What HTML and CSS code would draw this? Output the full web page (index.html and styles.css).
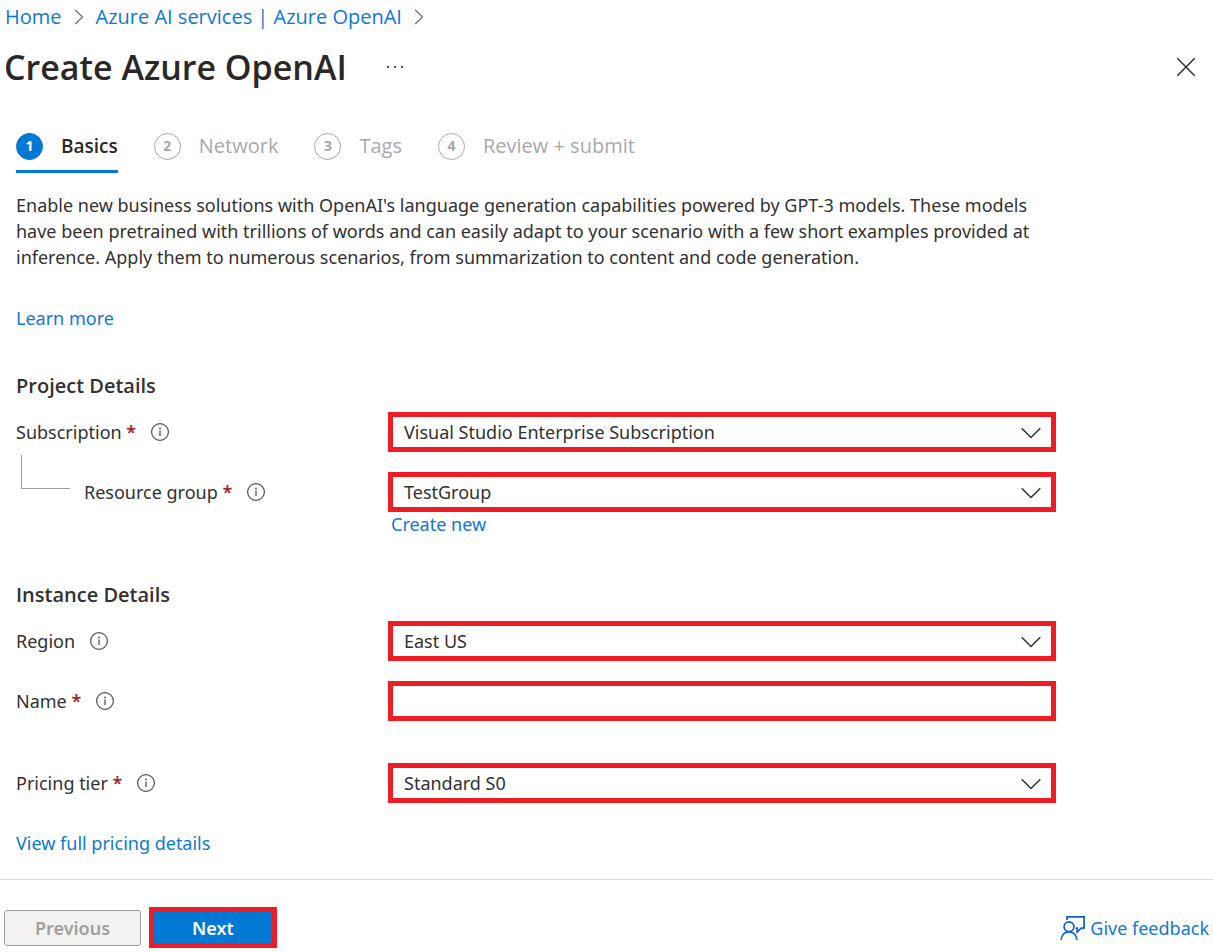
FILE: index.html
```html
<!DOCTYPE html>
<html lang="en">
<head>
<meta charset="utf-8">
<title>Create Azure OpenAI</title>
<meta name="viewport" content="width=device-width, initial-scale=1">
<link rel="stylesheet" href="styles.css">
</head>
<body>
<svg class="symbols" aria-hidden="true">
  <symbol id="info" viewBox="0 0 20 20"><circle cx="10" cy="10" r="8.4" fill="none" stroke="#505050" stroke-width="1.2"/><path d="M10 8.6V14" stroke="#505050" stroke-width="1.3"/><circle cx="10" cy="6.4" r=".9" fill="#505050"/></symbol>
  <symbol id="down" viewBox="0 0 20 12"><path d="M.7 1.2 10 10.5 19.3 1.2" fill="none" stroke="#323130" stroke-width="1.5"/></symbol>
  <symbol id="right" viewBox="0 0 10 16"><path d="M1.2 1 8.5 8 1.2 15" fill="none" stroke="#6e6e6e" stroke-width="1.2"/></symbol>
</svg>
<nav class="breadcrumb" aria-label="Breadcrumb">
  <a href="#">Home</a>
  <svg class="crumb-arrow"><use href="#right"/></svg>
  <a href="#">Azure AI services | Azure OpenAI</a>
  <svg class="crumb-arrow"><use href="#right"/></svg>
</nav>
<header class="title-row">
  <h1>Create Azure OpenAI</h1>
  <button class="icon-button" type="button" aria-label="More actions"><svg width="20" height="4" viewBox="0 0 20 4" fill="#323130"><circle cx="3" cy="2" r="1.1"/><circle cx="10" cy="2" r="1.1"/><circle cx="17" cy="2" r="1.1"/></svg></button>
  <button class="icon-button close" type="button" aria-label="Close"><svg width="20" height="20" viewBox="0 0 20 20"><path d="M1.3 1.3 18.7 18.7M18.7 1.3 1.3 18.7" stroke="#323130" stroke-width="1.5"/></svg></button>
</header>
<main class="content">
  <nav class="steps" aria-label="Steps">
    <button class="step active" type="button"><span class="badge">1</span>Basics</button>
    <button class="step" type="button"><span class="badge">2</span>Network</button>
    <button class="step" type="button"><span class="badge">3</span>Tags</button>
    <button class="step" type="button"><span class="badge">4</span>Review + submit</button>
  </nav>
  <p class="intro">Enable new business solutions with OpenAI's language generation capabilities powered by GPT-3 models. These models have been pretrained with trillions of words and can easily adapt to your scenario with a few short examples provided at inference. Apply them to numerous scenarios, from summarization to content and code generation.</p>
  <p class="learn"><a href="#">Learn more</a></p>

  <h2>Project Details</h2>
  <div class="field">
    <div class="label"><label for="subscription">Subscription <span class="required">*</span></label><svg class="info"><use href="#info"/></svg></div>
    <div class="select"><select id="subscription"><option>Visual Studio Enterprise Subscription</option></select><svg class="chevron"><use href="#down"/></svg></div>
  </div>
  <div class="field">
    <div class="label nested"><span class="branch"></span><label for="group">Resource group <span class="required">*</span></label><svg class="info"><use href="#info"/></svg></div>
    <div class="select"><select id="group"><option>TestGroup</option></select><svg class="chevron"><use href="#down"/></svg></div>
    <a class="create" href="#">Create new</a>
  </div>

  <h2 class="instance">Instance Details</h2>
  <div class="field">
    <div class="label"><label for="region">Region</label><svg class="info"><use href="#info"/></svg></div>
    <div class="select"><select id="region"><option>East US</option></select><svg class="chevron"><use href="#down"/></svg></div>
  </div>
  <div class="field">
    <div class="label"><label for="name">Name <span class="required">*</span></label><svg class="info"><use href="#info"/></svg></div>
    <input id="name" type="text">
  </div>
  <div class="field tier">
    <div class="label"><label for="tier">Pricing tier <span class="required">*</span></label><svg class="info"><use href="#info"/></svg></div>
    <div class="select"><select id="tier"><option>Standard S0</option></select><svg class="chevron"><use href="#down"/></svg></div>
  </div>
  <p class="pricing"><a href="#">View full pricing details</a></p>
</main>
<footer class="footer">
  <button class="previous" type="button" disabled>Previous</button>
  <button class="next" type="button">Next</button>
  <a class="feedback" href="#"><svg width="26" height="26" viewBox="0 0 26 26" fill="none" stroke="#0f5fd0" stroke-width="1.7"><path d="M7 5V1.9H24.1V13.1H21.3L17.2 17V13.1H15.6"/><circle cx="9" cy="11.8" r="4.9"/><path d="M1.2 25C1.2 20 4.7 16.8 9 16.8S16.8 20 16.8 25"/></svg>Give feedback</a>
</footer>
</body>
</html>
```
FILE: styles.css
```css
* { box-sizing: border-box; }

body {
  margin: 0;
  background: #fff;
  color: #323130;
  font: 18px/26px "Noto Sans", "Open Sans", sans-serif;
}

a { color: #0f78d4; text-decoration: none; }
p, h1, h2 { margin: 0; }
button, input, select { font: inherit; color: inherit; }
.symbols { display: none; }

.breadcrumb {
  display: flex;
  align-items: center;
  gap: 12px;
  height: 34px;
  padding-left: 5px;
  font-family: "Open Sans", sans-serif;
  font-size: 20px;
}
.crumb-arrow { width: 10px; height: 16px; }

.title-row {
  display: flex;
  align-items: center;
  height: 66px;
  padding: 0 17px 0 4px;
}
h1 {
  font-family: "Open Sans", sans-serif;
  font-size: 34px;
  line-height: 48px;
  font-weight: 600;
  color: #292827;
}
.icon-button {
  display: flex;
  margin-left: 38px;
  padding: 0;
  border: 0;
  background: none;
}
.close { margin-left: auto; }

.content { max-width: 1072px; padding: 0 16px; }

.steps { display: flex; gap: 36px; margin-top: 22px; }
.step {
  display: flex;
  align-items: center;
  gap: 18px;
  height: 51px;
  padding: 0;
  border: 0;
  border-bottom: 3px solid transparent;
  background: none;
  color: #a8a8a8;
  font-family: "Open Sans", sans-serif;
  font-size: 20px;
}
.step.active {
  border-color: #0078d4;
  color: #292827;
  font-size: 19px;
  font-weight: 600;
}
.badge {
  display: grid;
  place-items: center;
  width: 27px;
  height: 27px;
  border: 1px solid #a8a8a8;
  border-radius: 50%;
  font-size: 14px;
  line-height: 16px;
  font-weight: 700;
}
.active .badge { border-color: #0078d4; background: #0078d4; color: #fff; }

.intro { margin-top: 19px; }
.learn { margin-top: 35px; }

h2 {
  margin: 42px 0 13px;
  font-family: "Open Sans", sans-serif;
  font-size: 20px;
  line-height: 26px;
  font-weight: 600;
}
.instance { margin-top: 45px; }

.field {
  display: grid;
  grid-template-columns: 372px minmax(0, 1fr);
  margin-bottom: 20px;
}
.label { display: flex; align-items: center; gap: 14px; height: 40px; }
.label.nested { position: relative; padding-left: 68px; }
.branch {
  position: absolute;
  left: 5px;
  top: -17px;
  width: 49px;
  height: 34px;
  border-left: 1px solid #a19f9d;
  border-bottom: 1px solid #a19f9d;
}
.required { color: #a4262c; font-weight: 600; }
.info { width: 20px; height: 20px; }

.select { position: relative; }
.chevron {
  position: absolute;
  right: 15px;
  top: 15px;
  width: 20px;
  height: 12px;
  pointer-events: none;
}
select, input {
  display: block;
  width: 100%;
  height: 40px;
  padding: 0 11px;
  border: 5px solid #ee1c25;
  border-radius: 0;
  background: #fff;
  appearance: none;
}
.create { grid-column: 2; padding-left: 3px; line-height: 25px; }
.tier { margin: 42px 0 0; }
.pricing { margin-top: 27px; }

.footer {
  display: flex;
  align-items: center;
  gap: 8px;
  margin-top: 23px;
  padding: 27px 4px 4px;
  border-top: 1px solid #dcdcdc;
}
.previous {
  width: 137px;
  height: 36px;
  padding: 0;
  border: 1px solid #a19f9d;
  border-radius: 3px;
  background: #f3f2f1;
  color: #a19f9d;
  font-weight: 600;
}
.next {
  width: 128px;
  height: 41px;
  padding: 0;
  border: 5px solid #ee1c25;
  background: #0078d4;
  color: #fff;
  font-weight: 600;
}
.feedback { display: flex; align-items: center; gap: 4px; margin-left: auto; }
```
